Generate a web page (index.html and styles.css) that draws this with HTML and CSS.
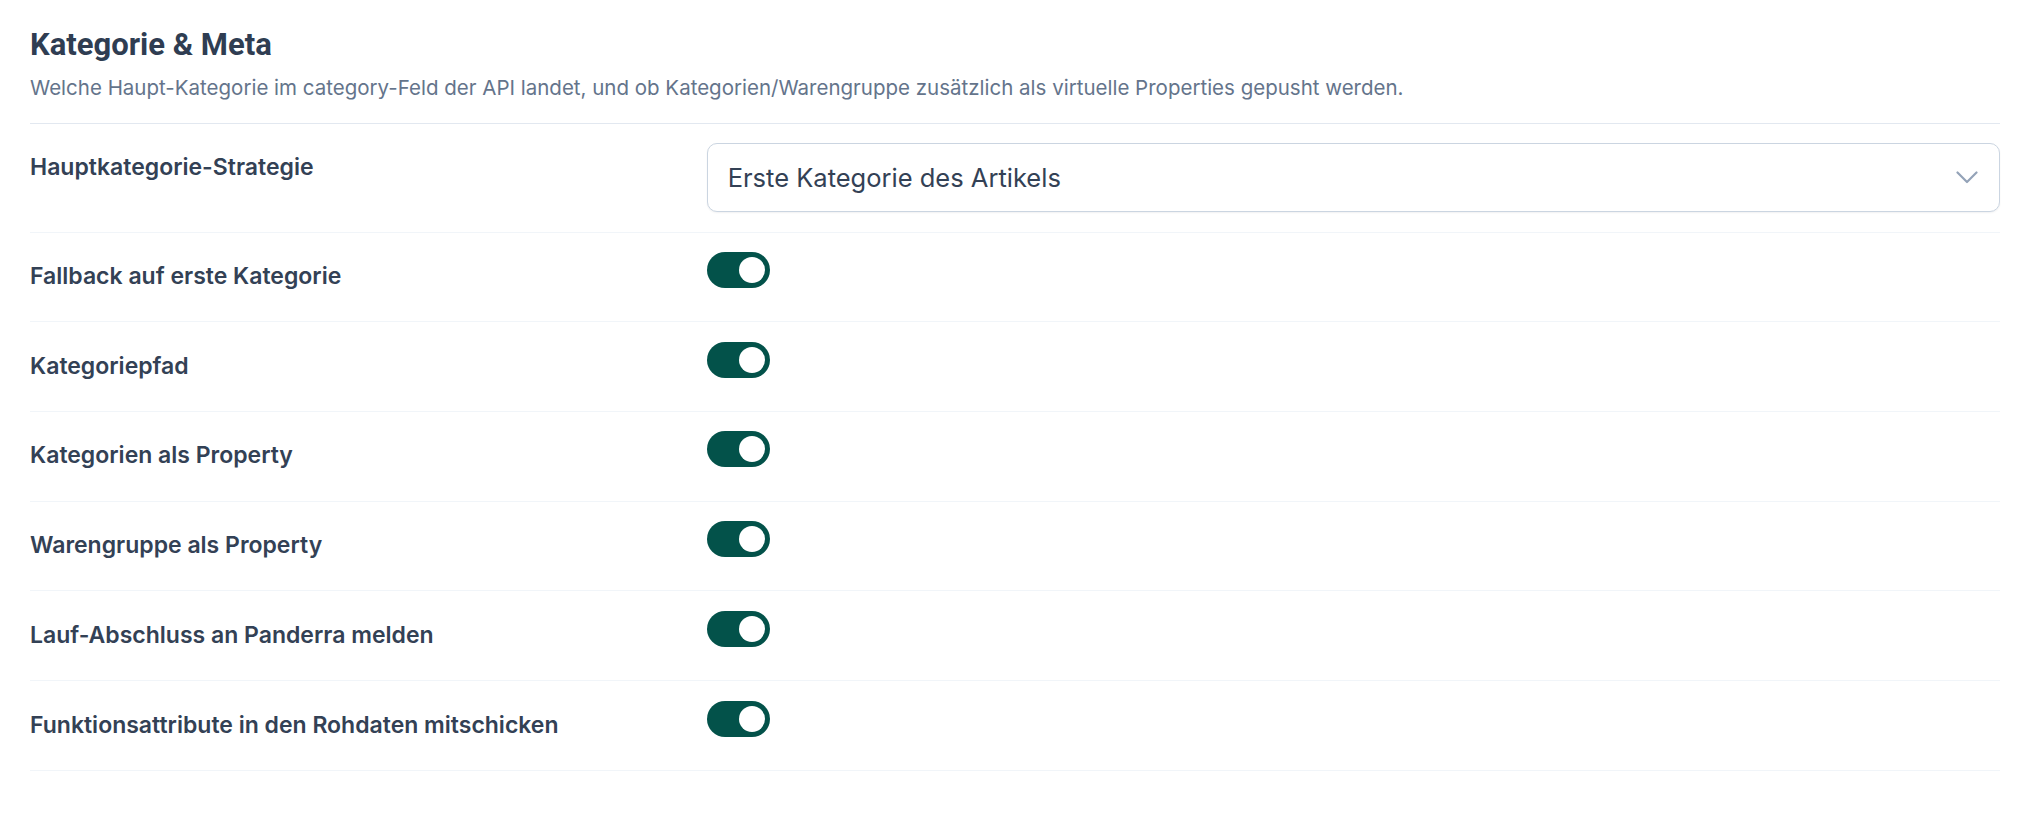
FILE: index.html
```html
<!DOCTYPE html>
<html lang="de">
<head>
  <meta charset="UTF-8">
  <meta name="viewport" content="width=device-width, initial-scale=1.0">
  <title>Kategorie &amp; Meta</title>
  <link rel="stylesheet" href="styles.css">
</head>
<body>

  <div class="settings">
    <div class="section-head">
      <h2 class="section-title">Kategorie &amp; Meta</h2>
      <p class="section-desc">Welche Haupt-Kategorie im category-Feld der API landet, und ob Kategorien/Warengruppe zusätzlich als virtuelle Properties gepusht werden.</p>
    </div>

    <div class="row">
      <label class="row-label">Hauptkategorie-Strategie</label>
      <div class="select">
        <span class="select-value">Erste Kategorie des Artikels</span>
        <svg class="select-chevron" width="22" height="13" viewBox="0 0 22 13">
          <path d="M1.5 1.5 L11 11 L20.5 1.5" fill="none" stroke="#94a3b8" stroke-width="2.2" stroke-linecap="round" stroke-linejoin="round"/>
        </svg>
      </div>
    </div>

    <div class="row">
      <label class="row-label">Fallback auf erste Kategorie</label>
      <span class="toggle on"></span>
    </div>
    <div class="row">
      <label class="row-label">Kategoriepfad</label>
      <span class="toggle on"></span>
    </div>
    <div class="row">
      <label class="row-label">Kategorien als Property</label>
      <span class="toggle on"></span>
    </div>
    <div class="row">
      <label class="row-label">Warengruppe als Property</label>
      <span class="toggle on"></span>
    </div>
    <div class="row">
      <label class="row-label">Lauf-Abschluss an Panderra melden</label>
      <span class="toggle on"></span>
    </div>
    <div class="row">
      <label class="row-label">Funktionsattribute in den Rohdaten mitschicken</label>
      <span class="toggle on"></span>
    </div>
  </div>

</body>
</html>
```

FILE: styles.css
```css
* {
  margin: 0;
  padding: 0;
  box-sizing: border-box;
}

body {
  font-family: Inter, 'Noto Sans', sans-serif;
  background: #fff;
  color: #334155;
}

.settings {
  padding: 0 26px 0 30px;
}

.section-head {
  padding: 26.5px 0 21px;
  border-bottom: 1px solid #e2e8f0;
}

.section-title {
  font-family: Roboto, 'DejaVu Sans Condensed', sans-serif;
  font-weight: 700;
  font-size: 31px;
  line-height: 36px;
  color: #2f3d52;
}

.section-desc {
  margin-top: 11px;
  font-size: 20.5px;
  line-height: 28px;
  color: #64748b;
}

.row {
  display: grid;
  grid-template-columns: 1fr 2fr;
  column-gap: 30px;
  align-items: start;
  padding: 19.5px 0;
  border-bottom: 1px solid #f1f5f9;
}

.row-label {
  font-size: 23px;
  font-weight: 600;
  line-height: 49.7px;
  color: #334155;
}

.select {
  height: 69px;
  display: flex;
  align-items: center;
  justify-content: space-between;
  padding: 0 21px 0 20px;
  border: 1px solid #cbd5e1;
  border-radius: 10px;
  background: #fff;
  box-shadow: 0 1px 2px rgba(15,23,42,0.06);
}

.select-value {
  font-size: 25.5px;
  color: #334155;
}

.toggle {
  position: relative;
  display: block;
  width: 63px;
  height: 36px;
  border-radius: 18px;
  background: #cbd5e1;
}

.toggle.on {
  background: #03524a;
}

.toggle::after {
  content: '';
  position: absolute;
  top: 5px;
  left: 5px;
  width: 26px;
  height: 26px;
  border-radius: 50%;
  background: #fff;
}

.toggle.on::after {
  left: auto;
  right: 5px;
}
```
